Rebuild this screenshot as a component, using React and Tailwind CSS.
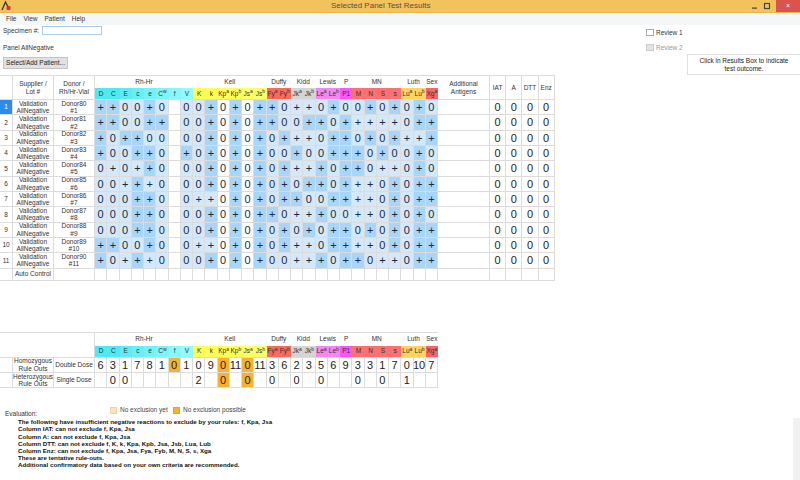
const ANTIGENS = [
  { n: "D", bg: "bg-[#4fe9f2]" }, { n: "C", bg: "bg-[#4fe9f2]" }, { n: "E", bg: "bg-[#5decf4]" }, { n: "c", bg: "bg-[#68eff6]" },
  { n: "e", bg: "bg-[#72f1f7]" }, { n: "C", sup: "w", bg: "bg-[#7ef4f9]" }, { n: "f", bg: "bg-[#88f7fb]" }, { n: "V", bg: "bg-[#90fafd]" },
  { n: "K", bg: "bg-[#ffff55]" }, { n: "k", bg: "bg-[#ffff55]" }, { n: "Kp", sup: "a", bg: "bg-[#ffff55]" }, { n: "Kp", sup: "b", bg: "bg-[#ffff55]" },
  { n: "Js", sup: "a", bg: "bg-[#ffff66]" }, { n: "Js", sup: "b", bg: "bg-[#ffff66]" },
  { n: "Fy", sup: "a", bg: "bg-[#f76a5c]" }, { n: "Fy", sup: "b", bg: "bg-[#f76a5c]" },
  { n: "Jk", sup: "a", bg: "bg-[#d4d4d4]" }, { n: "Jk", sup: "b", bg: "bg-[#d4d4d4]" },
  { n: "Le", sup: "a", bg: "bg-[#f287f0]" }, { n: "Le", sup: "b", bg: "bg-[#f287f0]" },
  { n: "P1", bg: "bg-[#fb55f5]" },
  { n: "M", bg: "bg-[#fb7171]" }, { n: "N", bg: "bg-[#fb7171]" }, { n: "S", bg: "bg-[#fb7171]" }, { n: "s", bg: "bg-[#fb7171]" },
  { n: "Lu", sup: "a", bg: "bg-[#fdd45f]" }, { n: "Lu", sup: "b", bg: "bg-[#fdd45f]" },
  { n: "Xg", sup: "a", bg: "bg-[#fb6464]" },
];

const GROUPS = [
  { label: "Rh-Hr", span: "col-span-8" },
  { label: "Kell", span: "col-span-6" },
  { label: "Duffy", span: "col-span-2" },
  { label: "Kidd", span: "col-span-2" },
  { label: "Lewis", span: "col-span-2" },
  { label: "P", span: "col-span-1" },
  { label: "MN", span: "col-span-4" },
  { label: "Luth", span: "col-span-2" },
  { label: "Sex", span: "col-span-1" },
];

// one string per donor, "_" means not tested
const PANEL = [
  "++00+0_00+0+0++0++0+00+0+0+0",
  "++00++_00+0+0++00++0+++++0++",
  "+0++00_00+0+0+0+++0++0+0++++",
  "+00++0_+0+0+0+00+00+++0+00+0",
  "0+0++0_00+0+0+0++++0++0++0+0",
  "00+++0_00+0+0+0+0++0+++0+0++",
  "000++0_0++0+0+0++00++++0+0++",
  "000++0_00+0+0++0+++00++0+0+0",
  "000++0_00+0+0+0+0+0++0+0+0++",
  "++00+0_0++0+0+0+++0++++0+0++",
  "+0+++0_00+0+0+00+++0++0++0++",
];

// index of the paired antigen for antithetical columns
const PAIRS = { 1: 3, 3: 1, 2: 4, 4: 2, 8: 9, 9: 8, 10: 11, 11: 10, 12: 13, 13: 12, 14: 15, 15: 14, 16: 17, 17: 16, 18: 19, 19: 18, 21: 22, 22: 21, 23: 24, 24: 23, 25: 26, 26: 25 };

const NO_SHADE = [6, 10, 12];

function shadeFor(row, i) {
  const v = row[i];
  if (v === "_" || (v === "0" && NO_SHADE.includes(i))) return "bg-white";
  if (v === "0") return "bg-[#d3e8fa]";
  const pair = PAIRS[i];
  if (pair !== undefined && row[pair] === "+") return "bg-[#d3e8fa]";
  return "bg-[#a9d5f9]";
}

const DOUBLE = [6, 3, 1, 7, 8, 1, 0, 1, 0, 9, 0, 11, 0, 11, 3, 6, 2, 3, 5, 6, 9, 3, 3, 1, 7, 0, 10, 7];
const SINGLE = ["", 0, 0, "", "", "", "", "", 2, "", 0, "", 0, "", 0, "", 0, "", 0, "", "", 0, "", 0, "", 1, "", ""];
const ORANGE_DOUBLE = [6, 10, 12];
const ORANGE_SINGLE = [10, 12];

const EVALUATION = [
  "The following have insufficient negative reactions to exclude by your rules: f, Kpa, Jsa",
  "Column IAT: can not exclude f, Kpa, Jsa",
  "Column A: can not exclude f, Kpa, Jsa",
  "Column DTT: can not exclude f, K, k, Kpa, Kpb, Jsa, Jsb, Lua, Lub",
  "Column Enz: can not exclude f, Kpa, Jsa, Fya, Fyb, M, N, S, s, Xga",
  "These are tentative rule-outs.",
  "Additional confirmatory data based on your own criteria are recommended.",
];

const line = "border-r border-b border-[#dcdcdc]";
const center = "flex items-center justify-center text-center";

function HeaderCells() {
  return (
    <>
      {GROUPS.map((g) => (
        <div key={g.label} className={`${g.span} ${center} text-[6.5px] text-[#333]`}>
          {g.label}
        </div>
      ))}
    </>
  );
}

function AntigenCells() {
  return ANTIGENS.map((a, i) => (
    <div key={i} className={`${a.bg} ${center} text-[6.5px] text-[#333] border-b border-[#dcdcdc]`}>
      <span>
        {a.n}
        {a.sup && <sup className="text-[5px] leading-none">{a.sup}</sup>}
      </span>
    </div>
  ));
}

function PanelRow({ index, row }) {
  return (
    <>
      <div className={`${center} ${line} text-[6.5px] ${index === 0 ? "bg-[#2d8ceb] text-white" : "text-[#333]"}`}>{index + 1}</div>
      <div className={`${center} ${line} text-[6.5px] leading-[7.5px] text-[#333]`}>Validation<br />AllNegative</div>
      <div className={`${center} ${line} text-[6.5px] leading-[7.5px] text-[#333]`}>Donor{80 + index}<br />#{index + 1}</div>
      {row.split("").map((v, i) => (
        <div key={i} className={`${center} ${line} ${shadeFor(row, i)} text-[11px] text-[#1c2a3a]`}>
          {v === "_" ? "" : v}
        </div>
      ))}
      <div className={line} />
      {[0, 1, 2, 3].map((i) => (
        <div key={i} className={`${center} ${line} text-[11px] text-[#222]`}>0</div>
      ))}
    </>
  );
}

function PanelTable() {
  return (
    <div className="grid w-fit border-t border-[#dcdcdc] grid-cols-[13px_41px_41px_repeat(28,12.25px)_52px_repeat(4,16.2px)] grid-rows-[12px_12px_repeat(11,15.33px)_12.5px]">
      <div className={`row-span-2 ${line}`} />
      <div className={`row-span-2 ${center} ${line} text-[6.5px] leading-[8px] text-[#333]`}>Supplier /<br />Lot #</div>
      <div className={`row-span-2 ${center} ${line} text-[6.5px] leading-[8px] text-[#333]`}>Donor /<br />Rh/Hr-Vial</div>
      <HeaderCells />
      <div className={`row-span-2 ${center} ${line} text-[6.5px] leading-[7.5px] text-[#333]`}>Additional<br />Antigens</div>
      {["IAT", "A", "DTT", "Enz"].map((t) => (
        <div key={t} className={`row-span-2 ${center} ${line} text-[6.5px] text-[#333]`}>{t}</div>
      ))}
      <AntigenCells />
      {PANEL.map((row, r) => (
        <PanelRow key={r} index={r} row={row} />
      ))}
      <div className={line} />
      <div className={`${center} ${line} text-[6.5px] text-[#333]`}>Auto Control</div>
      <div className={line} />
      {ANTIGENS.map((_, i) => <div key={i} className={line} />)}
      <div className={line} />
      {[0, 1, 2, 3].map((i) => <div key={i} className={line} />)}
    </div>
  );
}

function RuleOutTable() {
  return (
    <div className="grid w-fit border-t border-[#dcdcdc] grid-cols-[13px_41px_41px_repeat(28,12.25px)] grid-rows-[12.5px_12px_15.6px_15px]">
      <div className={`row-span-2 col-span-3 ${line}`} />
      <HeaderCells />
      <AntigenCells />
      <div className={line} />
      <div className={`${center} ${line} text-[6.5px] leading-[7.5px] text-[#333]`}>Homozygous<br />Rule Outs</div>
      <div className={`${center} ${line} text-[6.5px] text-[#333]`}>Double Dose</div>
      {DOUBLE.map((v, i) => (
        <div key={i} className={`${center} ${line} text-[11px] text-[#222] ${ORANGE_DOUBLE.includes(i) ? "bg-[#f5b132]" : ""}`}>{v}</div>
      ))}
      <div className={line} />
      <div className={`${center} ${line} text-[6.5px] leading-[7.5px] text-[#333]`}>Heterozygous<br />Rule Outs</div>
      <div className={`${center} ${line} text-[6.5px] text-[#333]`}>Single Dose</div>
      {SINGLE.map((v, i) => (
        <div key={i} className={`${center} ${line} text-[11px] text-[#222] ${ORANGE_SINGLE.includes(i) ? "bg-[#f5b132]" : ""}`}>{v}</div>
      ))}
    </div>
  );
}

function TitleBar() {
  return (
    <div className="h-[13px] shrink-0 flex items-center justify-between bg-[#f2c25c] border-b border-[#e9b650]">
      <svg width="12" height="12" viewBox="0 0 12 12" className="ml-[0.5px]">
        <path d="M1 10 L4.5 2 L7 7" fill="none" stroke="#333" strokeWidth="1.3" />
        <circle cx="7.5" cy="8" r="2.2" fill="#d8322a" />
      </svg>
      <div className="text-[8px] text-[#5a5040]">Selected Panel Test Results</div>
      <div className="flex items-center h-full">
        <svg width="12" height="12" viewBox="0 0 12 12">
          <rect x="3" y="7.5" width="5" height="1.2" fill="#444" />
        </svg>
        <svg width="12" height="12" viewBox="0 0 12 12" className="mr-[3px]">
          <rect x="3.5" y="3.5" width="5" height="5" fill="none" stroke="#444" strokeWidth="1.2" />
        </svg>
        <div className={`w-[24px] h-full bg-[#d9534f] text-white text-[7px] ${center}`}>×</div>
      </div>
    </div>
  );
}

export default function App() {
  return (
    <div className="w-[800px] h-[480px] overflow-hidden flex flex-col bg-white text-[#333] font-['Liberation_Sans',Arial,sans-serif]">
      <TitleBar />
      <div className="h-[12px] shrink-0 flex items-center gap-[7px] pl-[6px] bg-[#f5f6f7] text-[6.5px] text-[#333]">
        <span>File</span>
        <span>View</span>
        <span>Patient</span>
        <span>Help</span>
      </div>

      <div className="h-[50px] shrink-0 flex justify-between">
        <div className="pl-[3px] pt-px flex flex-col">
          <div className="flex items-center h-[9px] text-[6.5px]">
            <span className="w-[39px]">Specimen #:</span>
            <div className="w-[60px] h-[9px] border border-[#a8cdea] bg-white" />
          </div>
          <div className="mt-[9px] h-[8px] flex items-center text-[6.5px]">Panel AllNegative</div>
          <div className={`mt-[5px] w-[65px] h-[12px] bg-[#e1e1e1] border border-[#c4c4c4] text-[6.5px] text-[#222] ${center}`}>
            Select/Add Patient...
          </div>
        </div>
        <div className="w-[154px] flex flex-col">
          <div className="flex items-center gap-[2px] mt-[4px] h-[7px] text-[6.5px]">
            <div className="w-[8px] h-[7px] border border-[#aaa] bg-white" />
            <span>Review 1</span>
          </div>
          <div className="flex items-center gap-[2px] mt-[8px] h-[7px] text-[6.5px] text-[#999]">
            <div className="w-[8px] h-[7px] border border-[#ccc] bg-[#e4e4e4]" />
            <span>Review 2</span>
          </div>
          <div className={`mt-auto self-end w-[113px] h-[21px] px-[6px] border border-[#e0e0e0] border-r-0 text-[6.5px] leading-[8px] text-[#222] ${center}`}>
            Click in Results Box to indicate test outcome.
          </div>
        </div>
      </div>

      <PanelTable />

      <div className="mt-[51px]">
        <RuleOutTable />
      </div>

      <div className="flex-1 flex justify-between min-h-0">
        <div>
          <div className="flex mt-[18px] h-[8px]">
            <div className="w-[110px] pl-[5px] pt-[4px] text-[6.5px] leading-[8px]">Evaluation:</div>
            <div className="flex items-center text-[6.5px] text-[#444]">
              <div className="w-[7px] h-[7px] bg-[#fae6b8] border border-[#e8d6a8]" />
              <span className="ml-[3px] w-[53px]">No exclusion yet</span>
              <div className="w-[7px] h-[7px] bg-[#f2b233] border border-[#e0a428]" />
              <span className="ml-[3px]">No exclusion possible</span>
            </div>
          </div>
          <div className="pl-[18px] mt-[4px] text-[6.2px] leading-[7.2px] text-[#111] font-semibold">
            {EVALUATION.map((t) => (
              <div key={t}>{t}</div>
            ))}
          </div>
        </div>
        <div className="w-[7px] mt-[30px] bg-[#f1f1f1]" />
      </div>
    </div>
  );
}
